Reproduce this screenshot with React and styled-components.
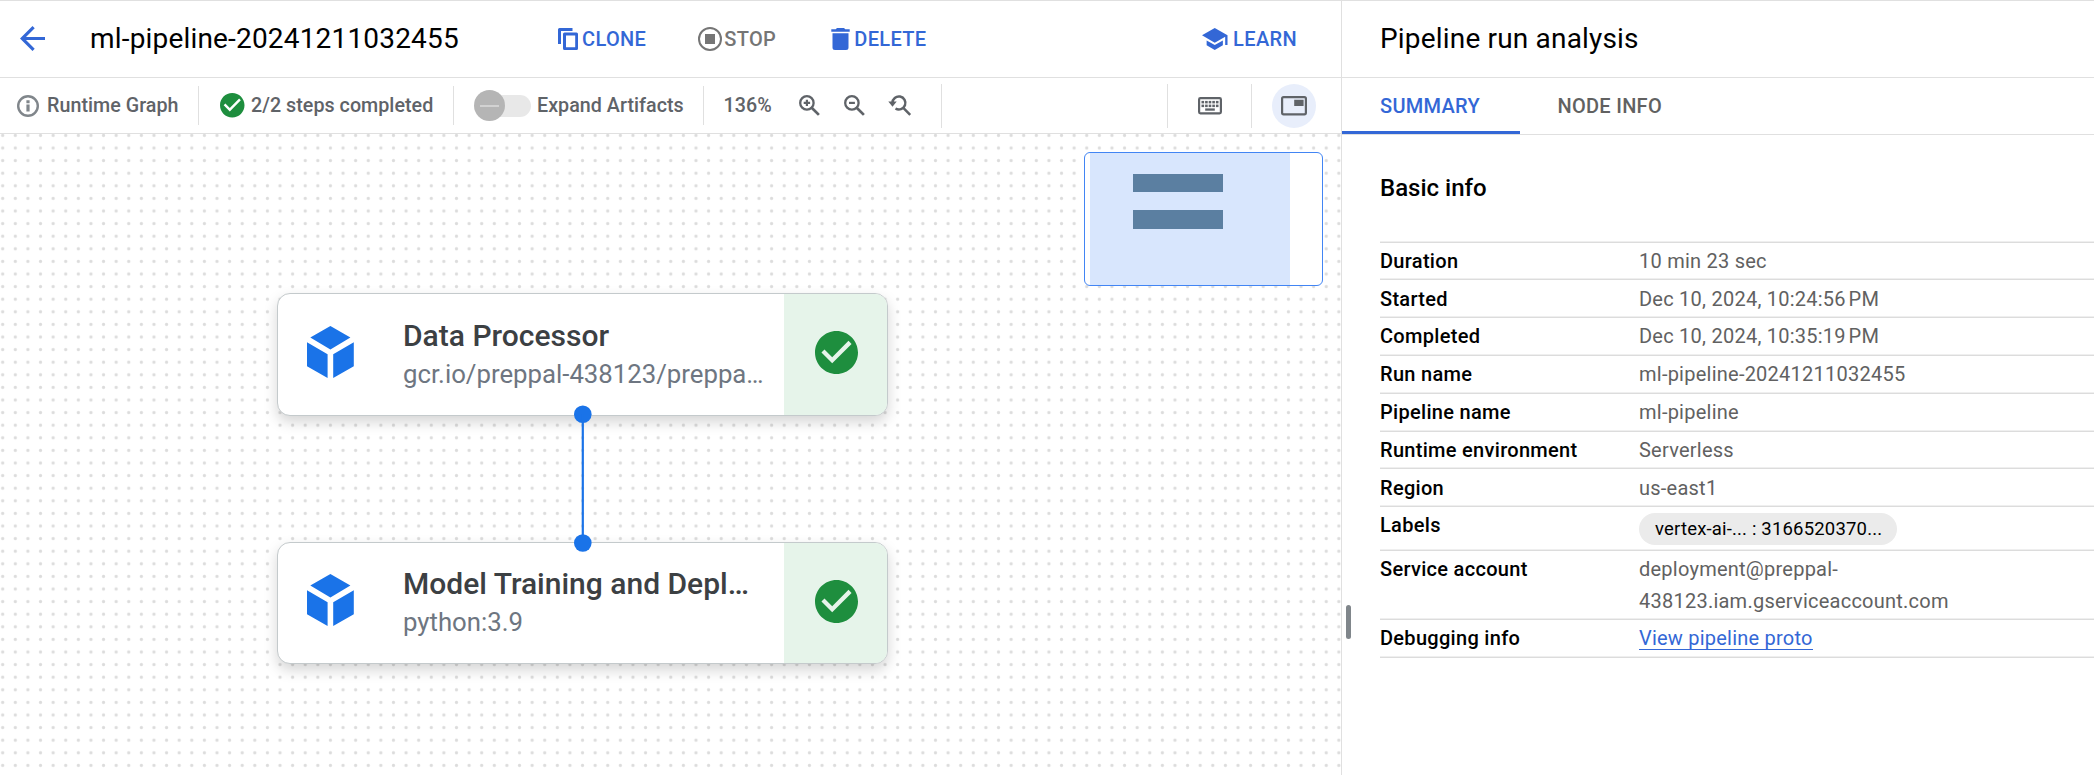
import React from "react";
import styled, { createGlobalStyle } from "styled-components";

const BLUE = "#3367d6";
const NODE_BLUE = "#1a73e8";
const GREEN = "#1e8e3e";
const GREY = "#5f6368";
const LINE = "#e0e0e0";

const GlobalStyle = createGlobalStyle`
  * { box-sizing: border-box; }
  body { margin: 0; background: #fff; overflow: hidden; }
`;

const Page = styled.div`
  display: flex;
  width: 100%;
  height: 100vh;
  border-top: 1px solid ${LINE};
  font-family: Roboto, "Liberation Sans", sans-serif;
  color: #000;
`;

const GraphPane = styled.main`
  display: flex;
  flex-direction: column;
  width: 1341px;
`;

const SidePane = styled.aside`
  position: relative;
  flex: 1;
  border-left: 1px solid ${LINE};
`;

const Header = styled.header`
  display: flex;
  align-items: center;
  height: 77px;
  padding: ${(p) => p.$padding};
  border-bottom: 1px solid ${LINE};
`;

const Title = styled.h1`
  margin: 0;
  padding-bottom: 1px;
  font-size: 28px;
  font-weight: 400;
  letter-spacing: 0.18px;
  white-space: nowrap;
`;

const PageTitle = styled(Title)`
  width: 467.5px;
  margin-left: 45px;
`;

const ActionButton = styled.button`
  display: flex;
  align-items: center;
  gap: ${(p) => p.$gap}px;
  margin: 0 ${(p) => p.$after}px 1px 0;
  padding: 0;
  border: 0;
  background: none;
  color: ${(p) => (p.$muted ? "#757575" : BLUE)};
  font: 500 20px/28px Roboto, "Liberation Sans", sans-serif;
  letter-spacing: 0.35px;
  white-space: nowrap;
`;

const ActionText = styled.span`
  padding-top: 1px;
`;

const Spacer = styled.div`
  flex: 1;
`;

const Icon = styled.svg`
  display: block;
  flex: none;
  width: ${(p) => p.$w}px;
  height: ${(p) => p.$h}px;
  color: ${(p) => p.$color || "inherit"};
  fill: currentColor;
`;

const Toolbar = styled.div`
  display: flex;
  align-items: center;
  height: 56px;
  border-bottom: 1px solid ${LINE};
  color: ${GREY};
`;

const ToolGroup = styled.div`
  display: flex;
  align-items: center;
  width: ${(p) => p.$width}px;
  height: ${(p) => (p.$tall ? 44 : 39)}px;
  padding-left: ${(p) => p.$pad}px;
  gap: ${(p) => p.$gap || 0}px;
  border-right: 1px solid ${LINE};
`;

const ToolText = styled.span`
  font-size: 19.7px;
  font-weight: 500;
  letter-spacing: 0.03px;
  line-height: 28px;
  white-space: nowrap;
`;

const Zoom = styled(ToolText)`
  width: 51px;
`;

const Toggle = styled.div`
  display: flex;
  align-items: center;
  width: 57px;
  height: 22px;
  margin-right: 6px;
  border-radius: 11px;
  background: linear-gradient(90deg, transparent 8px, #e8e8e8 8px);
`;

const Thumb = styled.div`
  display: flex;
  align-items: center;
  justify-content: center;
  width: 31px;
  height: 31px;
  border-radius: 50%;
  background: #b5b5b5;
  &::after {
    content: "";
    width: 19px;
    height: 2px;
    background: #d2d2d2;
  }
`;

const RoundButton = styled.div`
  display: flex;
  align-items: center;
  justify-content: center;
  width: 44px;
  height: 44px;
  margin: 0 25px 0 20px;
  border-radius: 50%;
  background: #e8eefb;
`;

const Canvas = styled.section`
  position: relative;
  flex: 1;
  overflow: hidden;
`;

const DotGrid = styled.svg`
  display: block;
  width: 100%;
  height: 100%;
`;

const Node = styled.article`
  position: absolute;
  left: 277px;
  top: ${(p) => p.$top}px;
  display: flex;
  width: 611px;
  height: 122.6px;
  border: 1px solid #c4cacc;
  border-radius: 13px;
  background: #fff;
  overflow: hidden;
  box-shadow: 0 6px 14px rgba(0, 0, 0, 0.17);
`;

const NodeIcon = styled.div`
  width: 125px;
  padding: 31.5px 0 0 29px;
`;

const NodeText = styled.div`
  flex: 1;
  padding-top: 23.9px;
  white-space: nowrap;
`;

const NodeTitle = styled.div`
  font-size: 30px;
  font-weight: 500;
  line-height: 36px;
  color: #3c4043;
`;

const NodeSubtitle = styled.div`
  font-size: 25.75px;
  line-height: 40px;
  color: #6e7681;
`;

const NodeStatus = styled.div`
  display: flex;
  align-items: center;
  justify-content: center;
  width: 103px;
  padding: 0 0 3px 1px;
  background: #e6f4ea;
`;

const Edge = styled.svg`
  position: absolute;
  left: 573px;
  top: 271px;
  width: 20px;
  height: 148px;
  fill: ${NODE_BLUE};
`;

const Minimap = styled.div`
  position: absolute;
  left: 1084px;
  top: 18px;
  width: 239px;
  height: 134px;
  padding-left: 5px;
  border: 1px solid #4285f4;
  border-radius: 6px;
  background: #fff;
`;

const Viewport = styled.div`
  display: flex;
  flex-direction: column;
  gap: 18px;
  width: 200px;
  height: 132px;
  padding: 21px 0 0 43px;
  background: #d8e6fd;
`;

const MiniNode = styled.div`
  width: 90px;
  height: 18.4px;
  background: #5b7fa1;
`;

const Tabs = styled.nav`
  display: flex;
  height: 57px;
  border-bottom: 1px solid ${LINE};
`;

const Tab = styled.div`
  padding: 0 38px;
  width: ${(p) => p.$width}px;
  border-bottom: 3px solid ${(p) => (p.$active ? BLUE : "transparent")};
  color: ${(p) => (p.$active ? BLUE : "#616161")};
  font-size: 20px;
  font-weight: 500;
  letter-spacing: 0.28px;
  line-height: 56px;
  white-space: nowrap;
`;

const Details = styled.div`
  padding-left: 38px;
`;

const SectionTitle = styled.h2`
  height: 106.7px;
  margin: 0;
  padding-top: 38px;
  font-size: 24px;
  font-weight: 500;
  letter-spacing: 0;
  line-height: 30px;
`;

const Table = styled.dl`
  margin: 0;
  border-top: 1px solid #dcdcdc;
  box-shadow: 0 -1px #efefef;
`;

const Row = styled.div`
  display: flex;
  padding: 3.1px 0 2px;
  border-bottom: 1px solid #dcdcdc;
  box-shadow: inset 0 -1px #efefef;
  font-size: 20px;
  line-height: 31.7px;
`;

const Label = styled.dt`
  width: 259px;
  font-weight: 500;
  letter-spacing: 0.3px;
`;

const Value = styled.dd`
  width: 340px;
  margin: 0;
  color: #616161;
  letter-spacing: 0.24px;
`;

const Chip = styled.span`
  display: block;
  width: 258px;
  height: 32px;
  margin: 3px 0 2.5px;
  padding-left: 16px;
  border-radius: 16px;
  background: #ebebeb;
  color: #000;
  font-size: 18.5px;
  letter-spacing: 0.18px;
  line-height: 32px;
  white-space: nowrap;
`;

const Link = styled.a`
  display: inline-block;
  height: 27px;
  border-bottom: 1px solid ${BLUE};
  color: ${BLUE};
  letter-spacing: 0.22px;
`;

const ResizeHandle = styled.div`
  position: absolute;
  left: 4px;
  top: 604px;
  width: 5px;
  height: 34px;
  border-radius: 3px;
  background: #80868b;
`;

const BackIcon = styled(Icon)`
  margin-bottom: 1px;
`;

const ArrowBack = () => (
  <BackIcon viewBox="4 4 16 16" $w={25} $h={25} $color={BLUE}>
    <path d="M20 11H7.830l5.590-5.590L12 4l-8 8 8 8 1.410-1.410L7.830 13H20v-2z" />
  </BackIcon>
);

const Clone = () => (
  <Icon viewBox="0 0 20 22" $w={20} $h={22}>
    <path d="M14.500 0H1.500Q0 0 0 1.500V16h3V3h11.500zM18.500 4.500h-12Q5 4.500 5 6v14.500Q5 22 6.500 22h12Q20 22 20 20.500V6q0-1.500-1.500-1.500zM17.200 19.200H8V7.400h9.200z" fillRule="evenodd" />
  </Icon>
);

const Stop = () => (
  <Icon viewBox="0 0 24 24" $w={24} $h={24}>
    <circle cx="12" cy="12" r="11" fill="none" stroke="currentColor" strokeWidth="2" />
    <path d="M7 7h10v10H7z" />
  </Icon>
);

const Trash = () => (
  <Icon viewBox="0 0 19 22" $w={19} $h={22}>
    <path d="M6 0h7l1.300 1.300H18.700V3.700H.3V1.300H4.700zM1.500 5.200h16V19.500Q17.500 22 15 22H4Q1.500 22 1.500 19.500z" />
  </Icon>
);

const School = () => (
  <Icon viewBox="1 3 22 18" $w={25.5} $h={22} preserveAspectRatio="none">
    <path d="M5 13.180v4L12 21l7-3.820v-4L12 17l-7-3.820zM12 3L1 9l11 6 9-4.910V17h2V9L12 3z" />
  </Icon>
);

const Info = () => (
  <Icon viewBox="0 0 22 22" $w={22} $h={22} $color="#80868b">
    <circle cx="11" cy="11" r="9.8" fill="none" stroke="currentColor" strokeWidth="2.4" />
    <path d="M9.400 5.300h3.200v3H9.400zM9.400 9.600h3.200v7H9.400z" />
  </Icon>
);

const Check = ({ size }) => (
  <Icon viewBox="2 2 20 20" $w={size} $h={size} $color={GREEN}>
    <path d="M12 2C6.480 2 2 6.480 2 12s4.480 10 10 10 10-4.480 10-10S17.520 2 12 2zm-2 15l-5-5 1.410-1.410L10 14.170l7.590-7.590L19 8l-9 9z" />
  </Icon>
);

const Magnifier = ({ children }) => (
  <Icon viewBox="0 0 21 21" $w={21} $h={21}>
    <path d="M12.700 12.700l7.200 7.200" fill="none" stroke="currentColor" strokeWidth="2.7" />
    <circle cx="7.9" cy="7.9" r="6.7" fill="none" stroke="currentColor" strokeWidth="2.3" />
    {children}
  </Icon>
);

const ZoomIn = () => (
  <Magnifier>
    <path d="M6.800 4.700H9v2.100h2.100V9H9v2.100H6.800V9H4.700V6.800h2.100z" />
  </Magnifier>
);

const ZoomOut = () => (
  <Magnifier>
    <path d="M5 6.800h5.900V9H5z" />
  </Magnifier>
);

const ZoomReset = () => (
  <Icon viewBox="1.5 0 23 21" $w={23} $h={21} overflow="visible">
    <path
      d="M4.900 8.800V7.900A6.500 6.500 0 1 1 8 13.500M15.800 12.800l6.900 7"
      fill="none"
      stroke="currentColor"
      strokeWidth="2.5"
    />
    <path d="M.8 6.400h8.400L5 11.700z" />
  </Icon>
);

const Keyboard = () => (
  <Icon viewBox="0 0 24 18" $w={24} $h={18}>
    <rect x="1.1" y="1.1" width="21.8" height="15.2" rx="1.3" fill="none" stroke="currentColor" strokeWidth="2.2" />
    {[3.5, 7.1, 10.7, 14.3, 17.9].map((x) => (
      <g key={x}>
        <rect x={x} y="3.9" width="2.6" height="2.5" />
        <rect x={x} y="7.6" width="2.6" height="2.5" />
      </g>
    ))}
    <rect x="7.2" y="11.4" width="9.6" height="2.3" />
  </Icon>
);

const PictureInPicture = () => (
  <Icon viewBox="0 0 26 20" $w={26} $h={20} $color={GREY}>
    <rect x="1.1" y="1.1" width="23.8" height="17.2" rx="1.5" fill="none" stroke="currentColor" strokeWidth="2.2" />
    <path d="M13.200 3.800h9.400v6.200h-9.400z" />
  </Icon>
);

const Cube = () => (
  <Icon viewBox="0 0 47 52" $w={47} $h={52} $color={NODE_BLUE}>
    <path d="M23.400 0L43.400 11.600 23.400 23.400 3.300 11.600zM0 16.300L20.600 28.300V52L0 40.200zM46.800 16.300L26.200 28.300V52L46.800 40.200z" />
  </Icon>
);

const nodes = [
  { title: "Data Processor", subtitle: "gcr.io/preppal-438123/preppa…", top: 159 },
  { title: "Model Training and Depl…", subtitle: "python:3.9", top: 407.5 },
];

const rows = [
  ["Duration", "10 min 23 sec"],
  ["Started", "Dec 10, 2024, 10:24:56\u202fPM"],
  ["Completed", "Dec 10, 2024, 10:35:19\u202fPM"],
  ["Run name", "ml-pipeline-20241211032455"],
  ["Pipeline name", "ml-pipeline"],
  ["Runtime environment", "Serverless"],
  ["Region", "us-east1"],
  ["Labels", <Chip>vertex-ai-... : 3166520370...</Chip>],
  ["Service account", "deployment@preppal-438123.iam.gserviceaccount.com"],
  ["Debugging info", <Link>View pipeline proto</Link>],
];

export default function App() {
  return (
    <>
      <GlobalStyle />
      <Page>
        <GraphPane>
          <Header $padding="0 44px 0 20px">
            <ArrowBack />
            <PageTitle>ml-pipeline-20241211032455</PageTitle>
            <ActionButton $gap={4.5} $after={52}><Clone /><ActionText>CLONE</ActionText></ActionButton>
            <ActionButton $gap={2} $after={54.5} $muted><Stop /><ActionText>STOP</ActionText></ActionButton>
            <ActionButton $gap={4.5} $after={0}><Trash /><ActionText>DELETE</ActionText></ActionButton>
            <Spacer />
            <ActionButton $gap={5.5} $after={0}><School /><ActionText>LEARN</ActionText></ActionButton>
          </Header>
          <Toolbar>
            <ToolGroup $width={199} $pad={17} $gap={8}>
              <Info />
              <ToolText>Runtime Graph</ToolText>
            </ToolGroup>
            <ToolGroup $width={255} $pad={21} $gap={6.5}>
              <Check size={24.5} />
              <ToolText>2/2 steps completed</ToolText>
            </ToolGroup>
            <ToolGroup $width={250} $pad={20}>
              <Toggle><Thumb /></Toggle>
              <ToolText>Expand Artifacts</ToolText>
            </ToolGroup>
            <ToolGroup $width={238} $pad={19.5} $gap={24} $tall>
              <Zoom>136%</Zoom>
              <ZoomIn />
              <ZoomOut />
              <ZoomReset />
            </ToolGroup>
            <Spacer />
            <ToolGroup $width={1} $pad={0} $tall />
            <ToolGroup $width={84} $pad={30} $tall><Keyboard /></ToolGroup>
            <RoundButton><PictureInPicture /></RoundButton>
          </Toolbar>
          <Canvas>
            <DotGrid>
              <defs>
                <pattern id="dots" x="-3.6" y="-4.9" width="12.605" height="12.6" patternUnits="userSpaceOnUse">
                  <circle cx="6.3" cy="6.3" r="1.6" fill="#dcdcdc" />
                </pattern>
              </defs>
              <rect width="100%" height="100%" fill="url(#dots)" />
            </DotGrid>
            {nodes.map((n) => (
              <Node key={n.title} $top={n.top}>
                <NodeIcon><Cube /></NodeIcon>
                <NodeText>
                  <NodeTitle>{n.title}</NodeTitle>
                  <NodeSubtitle>{n.subtitle}</NodeSubtitle>
                </NodeText>
                <NodeStatus><Check size={43} /></NodeStatus>
              </Node>
            ))}
            <Edge viewBox="0 0 20 148">
              <circle cx="9.8" cy="9.3" r="8.8" />
              <path d="M8.700 9h2.200v129H8.700z" />
              <circle cx="9.8" cy="138" r="8.8" />
            </Edge>
            <Minimap>
              <Viewport>
                <MiniNode />
                <MiniNode />
              </Viewport>
            </Minimap>
          </Canvas>
        </GraphPane>
        <SidePane>
          <Header $padding="0 0 0 38px">
            <Title>Pipeline run analysis</Title>
          </Header>
          <Tabs>
            <Tab $active $width={177.5}>SUMMARY</Tab>
            <Tab $width={180}>NODE INFO</Tab>
          </Tabs>
          <Details>
            <SectionTitle>Basic info</SectionTitle>
            <Table>
              {rows.map(([label, value]) => (
                <Row key={label}>
                  <Label>{label}</Label>
                  <Value>{value}</Value>
                </Row>
              ))}
            </Table>
          </Details>
          <ResizeHandle />
        </SidePane>
      </Page>
    </>
  );
}
